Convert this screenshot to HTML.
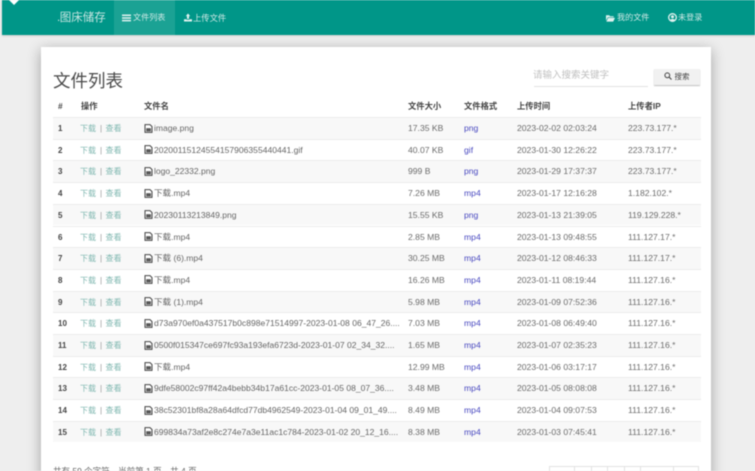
<!DOCTYPE html>
<html lang="zh">
<head>
<meta charset="utf-8">
<title>文件列表</title>
<style>
html,body{margin:0;padding:0;width:755px;height:471px;overflow:hidden;background:#eeeeee}
body{font-family:"Liberation Sans","Noto Sans CJK SC",sans-serif;position:relative;color:#555}
#w{position:absolute;left:0;top:0;width:755px;height:471px;overflow:hidden;filter:blur(.45px)}
.a{position:absolute;white-space:nowrap}
#nav{left:2px;top:0;width:753px;height:35px;background:#009688;box-shadow:0 1px 2px rgba(0,0,0,.15)}
.n{color:#cfe9e6;font-size:8.1px;line-height:12px}
#card{left:41px;top:47px;width:670px;height:440px;background:#fff;box-shadow:0 3px 13px rgba(0,0,0,.32)}
.th{font-size:8.3px;font-weight:bold;color:#444;top:100px;line-height:12px}
.r{position:absolute;left:53px;width:648px;height:21.7px;border-top:1px solid #ececec;box-sizing:border-box;font-size:8.6px;line-height:21px;color:#6b6b6b}
.r.o{background:#f8f8f8}
.r span{position:absolute;top:0;white-space:nowrap}
.c0{left:5px;font-weight:bold;color:#444;font-size:8px}
.c1{left:27px;color:#7fb7b0;font-size:8px}
.c1 i{font-style:normal;color:#999;margin:0 3.4px 0 4px}
.c2{left:91px;color:#666;font-size:8.55px}
.c2 svg{vertical-align:-1.5px;margin-right:1px}
.c3{left:355px}
.c4{left:411px;color:#4a4ac0}
.c5{left:464px}
.c6{left:575px}
</style>
</head>
<body>
<div id="w">
<div id="nav" class="a"></div>
<svg class="a" style="left:9px;top:0" width="10" height="5" viewBox="0 0 10 5"><path d="M0 0H10L5 5Z" fill="#fff"/></svg>
<div class="a" style="left:114px;top:0;width:61px;height:35px;background:#1ba294"></div>
<div class="a" style="left:57px;top:9.5px;font-size:11.5px;line-height:16px;color:#c6e5e1">.<span style="margin-left:-.5px">图床储存</span></div>
<svg class="a" style="left:122px;top:14px" width="9" height="8" viewBox="0 0 9 8"><path d="M0 .5H9V2H0ZM0 3.2H9V4.7H0ZM0 5.9H9V7.4H0Z" fill="#e2f2f0"/></svg>
<div class="a n" style="left:133px;top:12px">文件列表</div>
<svg class="a" style="left:184px;top:13px" width="8" height="9" viewBox="0 0 9 9"><path d="M4.5 0 7 3H5.6V6H3.4V3H2ZM0 6.4H2.8V7H6.2V6.4H9V9H0Z" fill="#e2f2f0"/></svg>
<div class="a n" style="left:193px;top:12px;font-size:8.3px">上传文件</div>
<svg class="a" style="left:606px;top:14px" width="9" height="8" viewBox="0 0 10 8"><path d="M0 1H3.5L4.5 2H8.5V3.2H2L0 7ZM2.4 3.8H10L8 8H.4Z" fill="#e2f2f0"/></svg>
<div class="a n" style="left:617px;top:12px">我的文件</div>
<svg class="a" style="left:668px;top:13px" width="9" height="9" viewBox="0 0 9 9"><circle cx="4.5" cy="4.5" r="3.8" fill="none" stroke="#e2f2f0" stroke-width="1.3"/><circle cx="4.5" cy="3.7" r="1.5" fill="#e2f2f0"/><path d="M2 7.2C3 5.4 6 5.4 7 7.2L4.5 8.4Z" fill="#e2f2f0"/></svg>
<div class="a n" style="left:678px;top:12px">未登录</div>

<div id="card" class="a"></div>
<div class="a" style="left:53px;top:69px;font-size:17.5px;line-height:24px;color:#4a4a4a">文件列表</div>
<div class="a" style="left:533px;top:69px;font-size:9.5px;line-height:13px;color:#c0c0c0">请输入搜索关键字</div>
<div class="a" style="left:534px;top:86px;width:114px;height:1px;background:#e2e2e2"></div>
<div class="a" style="left:654px;top:69px;width:46px;height:16px;background:#f1f1f1;box-shadow:0 1px 1px rgba(0,0,0,.25);font-size:7.5px;line-height:16px;text-align:center;color:#444"><svg width="8" height="8" viewBox="0 0 8 8" style="vertical-align:-1px"><circle cx="3.3" cy="3.3" r="2.4" fill="none" stroke="#444" stroke-width="1"/><path d="M5 5 7.5 7.5" stroke="#444" stroke-width="1.1"/></svg> 搜索</div>

<div class="a th" style="left:58px">#</div>
<div class="a th" style="left:81px">操作</div>
<div class="a th" style="left:144px">文件名</div>
<div class="a th" style="left:408px">文件大小</div>
<div class="a th" style="left:464px">文件格式</div>
<div class="a th" style="left:517px">上传时间</div>
<div class="a th" style="left:628px">上传者IP</div>

<svg width="0" height="0" style="position:absolute"><defs>
<symbol id="f" viewBox="0 0 9 9"><path d="M1 .6H6L8 2.6V8.4H1Z" fill="#fff" stroke="#444" stroke-width="1"/><path d="M2.2 4.2H6.9V7.4H2.2Z" fill="#555"/></symbol>
</defs></svg>

<div class="r o" style="top:117px"><span class="c0">1</span><span class="c1">下载<i>|</i>查看</span><span class="c2"><svg width="9" height="9"><use href="#f"/></svg>image.png</span><span class="c3">17.35 KB</span><span class="c4">png</span><span class="c5">2023-02-02 02:03:24</span><span class="c6">223.73.177.*</span></div>
<div class="r" style="top:138.7px"><span class="c0">2</span><span class="c1">下载<i>|</i>查看</span><span class="c2"><svg width="9" height="9"><use href="#f"/></svg>20200115124554157906355440441.gif</span><span class="c3">40.07 KB</span><span class="c4">gif</span><span class="c5">2023-01-30 12:26:22</span><span class="c6">223.73.177.*</span></div>
<div class="r o" style="top:160.4px"><span class="c0">3</span><span class="c1">下载<i>|</i>查看</span><span class="c2"><svg width="9" height="9"><use href="#f"/></svg>logo_22332.png</span><span class="c3">999 B</span><span class="c4">png</span><span class="c5">2023-01-29 17:37:37</span><span class="c6">223.73.177.*</span></div>
<div class="r" style="top:182.1px"><span class="c0">4</span><span class="c1">下载<i>|</i>查看</span><span class="c2"><svg width="9" height="9"><use href="#f"/></svg>下载.mp4</span><span class="c3">7.26 MB</span><span class="c4">mp4</span><span class="c5">2023-01-17 12:16:28</span><span class="c6">1.182.102.*</span></div>
<div class="r o" style="top:203.8px"><span class="c0">5</span><span class="c1">下载<i>|</i>查看</span><span class="c2"><svg width="9" height="9"><use href="#f"/></svg>20230113213849.png</span><span class="c3">15.55 KB</span><span class="c4">png</span><span class="c5">2023-01-13 21:39:05</span><span class="c6">119.129.228.*</span></div>
<div class="r" style="top:225.5px"><span class="c0">6</span><span class="c1">下载<i>|</i>查看</span><span class="c2"><svg width="9" height="9"><use href="#f"/></svg>下载.mp4</span><span class="c3">2.85 MB</span><span class="c4">mp4</span><span class="c5">2023-01-13 09:48:55</span><span class="c6">111.127.17.*</span></div>
<div class="r o" style="top:247.2px"><span class="c0">7</span><span class="c1">下载<i>|</i>查看</span><span class="c2"><svg width="9" height="9"><use href="#f"/></svg>下载 (6).mp4</span><span class="c3">30.25 MB</span><span class="c4">mp4</span><span class="c5">2023-01-12 08:46:33</span><span class="c6">111.127.17.*</span></div>
<div class="r" style="top:268.9px"><span class="c0">8</span><span class="c1">下载<i>|</i>查看</span><span class="c2"><svg width="9" height="9"><use href="#f"/></svg>下载.mp4</span><span class="c3">16.26 MB</span><span class="c4">mp4</span><span class="c5">2023-01-11 08:19:44</span><span class="c6">111.127.16.*</span></div>
<div class="r o" style="top:290.6px"><span class="c0">9</span><span class="c1">下载<i>|</i>查看</span><span class="c2"><svg width="9" height="9"><use href="#f"/></svg>下载 (1).mp4</span><span class="c3">5.98 MB</span><span class="c4">mp4</span><span class="c5">2023-01-09 07:52:36</span><span class="c6">111.127.16.*</span></div>
<div class="r" style="top:312.3px"><span class="c0">10</span><span class="c1">下载<i>|</i>查看</span><span class="c2"><svg width="9" height="9"><use href="#f"/></svg>d73a970ef0a437517b0c898e71514997-2023-01-08 06_47_26....</span><span class="c3">7.03 MB</span><span class="c4">mp4</span><span class="c5">2023-01-08 06:49:40</span><span class="c6">111.127.16.*</span></div>
<div class="r o" style="top:334px"><span class="c0">11</span><span class="c1">下载<i>|</i>查看</span><span class="c2"><svg width="9" height="9"><use href="#f"/></svg>0500f015347ce697fc93a193efa6723d-2023-01-07 02_34_32....</span><span class="c3">1.65 MB</span><span class="c4">mp4</span><span class="c5">2023-01-07 02:35:23</span><span class="c6">111.127.16.*</span></div>
<div class="r" style="top:355.7px"><span class="c0">12</span><span class="c1">下载<i>|</i>查看</span><span class="c2"><svg width="9" height="9"><use href="#f"/></svg>下载.mp4</span><span class="c3">12.99 MB</span><span class="c4">mp4</span><span class="c5">2023-01-06 03:17:17</span><span class="c6">111.127.16.*</span></div>
<div class="r o" style="top:377.4px"><span class="c0">13</span><span class="c1">下载<i>|</i>查看</span><span class="c2"><svg width="9" height="9"><use href="#f"/></svg>9dfe58002c97ff42a4bebb34b17a61cc-2023-01-05 08_07_36....</span><span class="c3">3.48 MB</span><span class="c4">mp4</span><span class="c5">2023-01-05 08:08:08</span><span class="c6">111.127.16.*</span></div>
<div class="r" style="top:399.1px"><span class="c0">14</span><span class="c1">下载<i>|</i>查看</span><span class="c2"><svg width="9" height="9"><use href="#f"/></svg>38c52301bf8a28a64dfcd77db4962549-2023-01-04 09_01_49....</span><span class="c3">8.49 MB</span><span class="c4">mp4</span><span class="c5">2023-01-04 09:07:53</span><span class="c6">111.127.16.*</span></div>
<div class="r o" style="top:420.8px"><span class="c0">15</span><span class="c1">下载<i>|</i>查看</span><span class="c2"><svg width="9" height="9"><use href="#f"/></svg>699834a73af2e8c274e7a3e11ac1c784-2023-01-02 20_12_16....</span><span class="c3">8.38 MB</span><span class="c4">mp4</span><span class="c5">2023-01-03 07:45:41</span><span class="c6">111.127.16.*</span></div>

<div class="a" style="left:53px;top:465px;font-size:8.5px;line-height:12px;color:#666">共有 59 个字符，当前第 1 页，共 4 页</div>
<div class="a" style="left:549px;top:466px;width:150px;height:12px;border:1px solid #e2e2e2;box-sizing:border-box;background:#fff"></div>
<div class="a" style="left:574px;top:466px;width:1px;height:6px;background:#e2e2e2"></div>
<div class="a" style="left:591px;top:466px;width:1px;height:6px;background:#e2e2e2"></div>
<div class="a" style="left:607px;top:466px;width:1px;height:6px;background:#e2e2e2"></div>
<div class="a" style="left:624px;top:466px;width:1px;height:6px;background:#e2e2e2"></div>
<div class="a" style="left:640px;top:466px;width:1px;height:6px;background:#e2e2e2"></div>
<div class="a" style="left:673px;top:466px;width:1px;height:6px;background:#e2e2e2"></div>
</div>
</body>
</html>
